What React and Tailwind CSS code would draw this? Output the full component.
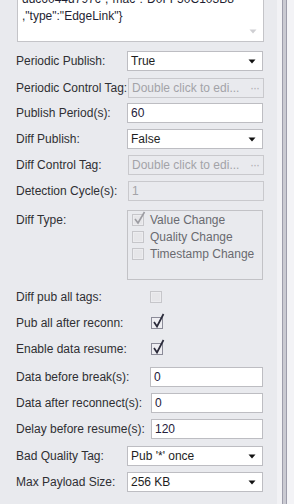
import React from "react";

const font = { fontFamily: '"Liberation Sans", Arial, sans-serif' };

function Arrow() {
  return (
    <svg width="8" height="5" viewBox="0 0 8 5" className="shrink-0">
      <path d="M0.5 0.5 L7.5 0.5 L4 4.5 Z" fill="#111" />
    </svg>
  );
}

function Select({ value }) {
  return (
    <div className="h-[20px] w-[136px] bg-white border border-[#bdbdc2] flex items-center pl-[3px] pr-[6px] text-[#1e1e1e]">
      <span className="flex-1 leading-none">{value}</span>
      <Arrow />
    </div>
  );
}

function Input({ value, w = "w-[136px]" }) {
  return (
    <div className={`h-[20px] ${w} bg-white border border-[#bdbdc2] flex items-center pl-[3px] text-[#24203a]`}>
      <span className="leading-none">{value}</span>
    </div>
  );
}

function Disabled({ value, dots }) {
  return (
    <div className="h-[20px] w-[136px] border border-[#c9c9cd] flex items-center pl-[3px] pr-[4px] text-[#a3a3a8]">
      <span className="flex-1 leading-none whitespace-nowrap overflow-hidden">{value}</span>
      {dots && <span className="leading-none text-[#b0b0b4] tracking-[-1px]">···</span>}
    </div>
  );
}

function Check({ checked, disabled }) {
  if (disabled) {
    return (
      <div className="relative w-[12px] h-[12px] border border-[#c6c6ca] bg-[#ececef] shrink-0">
        <div className="absolute inset-[1px] bg-[#e6e6e9]" />
        {checked && (
          <svg width="14" height="16" viewBox="0 0 14 16" className="absolute left-[0px] top-[-5px]">
            <path d="M2 9 L5 13 L11.5 2" stroke="#9c9ca2" strokeWidth="1.6" fill="none" />
          </svg>
        )}
      </div>
    );
  }
  return (
    <div className="relative w-[12px] h-[12px] border border-[#8b8b98] bg-[#eeeef2] shrink-0">
      {checked && (
        <svg width="14" height="17" viewBox="0 0 14 17" className="absolute left-[0px] top-[-6px]">
          <path d="M2 10 L5 14.5 L11.5 2" stroke="#2a2a3a" strokeWidth="1.7" fill="none" />
        </svg>
      )}
    </div>
  );
}

function Row({ label, children, mt, lw = "w-[111px]" }) {
  return (
    <div className={`flex items-center h-[20px] ${mt}`}>
      <div className={`${lw} shrink-0 whitespace-nowrap text-[#2f2f33]`}>{label}</div>
      {children}
    </div>
  );
}

export default function App() {
  return (
    <div className="w-[294px] h-[504px] overflow-hidden flex bg-[#e9eaee] text-[12px]" style={font}>
      <div className="w-[277px] shrink-0 flex flex-col pl-[16px]">
        {/* textarea */}
        <div className="relative ml-[1px] mt-[-12px] w-[247px] h-[54px] bg-white border border-[#c4c4c8] pl-[4px] pt-[2px] text-[#1f1f33] leading-[17px]">
          <div className="whitespace-nowrap">ddc6044d797c","mac":"D0FF50C103B8</div>
          <div className="whitespace-nowrap">,"type":"EdgeLink"{"}"}</div>
          <svg width="8" height="5" viewBox="0 0 8 5" className="absolute right-[6px] bottom-[7px]">
            <path d="M0.5 0.5 L7.5 0.5 L4 4.5 Z" fill="#cfcfd3" />
          </svg>
        </div>

        <Row label="Periodic Publish:" mt="mt-[9px]">
          <Select value="True" />
        </Row>
        <Row label="Periodic Control Tag:" mt="mt-[7px]" lw="w-[112px]">
          <div className="w-[135px]"><Disabled value="Double click to edi..." dots /></div>
        </Row>
        <Row label="Publish Period(s):" mt="mt-[5px]">
          <Input value="60" />
        </Row>
        <Row label="Diff Publish:" mt="mt-[6px]">
          <Select value="False" />
        </Row>
        <Row label="Diff Control Tag:" mt="mt-[6px]" lw="w-[112px]">
          <div className="w-[135px]"><Disabled value="Double click to edi..." dots /></div>
        </Row>
        <Row label="Detection Cycle(s):" mt="mt-[6px]" lw="w-[112px]">
          <div className="w-[135px]"><Disabled value="1" /></div>
        </Row>

        {/* Diff type */}
        <div className="flex mt-[9px]">
          <div className="w-[111px] shrink-0 pt-[1px] text-[#2f2f33]">Diff Type:</div>
          <div className="w-[136px] h-[70px] border border-[#c2c2c6] pt-0 pl-[4px] flex flex-col text-[#6a6a70]">
            <div className="flex items-center h-[17px] gap-[6px]">
              <Check checked disabled />
              <span>Value Change</span>
            </div>
            <div className="flex items-center h-[17px] gap-[6px]">
              <Check disabled />
              <span>Quality Change</span>
            </div>
            <div className="flex items-center h-[17px] gap-[6px]">
              <Check disabled />
              <span>Timestamp Change</span>
            </div>
          </div>
        </div>

        <Row label="Diff pub all tags:" mt="mt-[7px]" lw="w-[134px]">
          <Check disabled />
        </Row>
        <Row label="Pub all after reconn:" mt="mt-[6px]" lw="w-[135px]">
          <Check checked />
        </Row>
        <Row label="Enable data resume:" mt="mt-[6px]" lw="w-[135px]">
          <Check checked />
        </Row>

        <Row label="Data before break(s):" mt="mt-[8px]" lw="w-[134px]">
          <Input value="0" w="w-[113px]" />
        </Row>
        <Row label="Data after reconnect(s):" mt="mt-[6px]" lw="w-[135px]">
          <Input value="0" w="w-[112px]" />
        </Row>
        <Row label="Delay before resume(s):" mt="mt-[6px]" lw="w-[135px]">
          <Input value="120" w="w-[112px]" />
        </Row>
        <Row label="Bad Quality Tag:" mt="mt-[7px]">
          <Select value="Pub '*' once" />
        </Row>
        <Row label="Max Payload Size:" mt="mt-[6px]">
          <Select value="256 KB" />
        </Row>
      </div>
      {/* right edge */}
      <div className="w-[5px] bg-[#f2f2f5]" />
      <div className="w-[1px] bg-[#9d9dab]" />
      <div className="w-[3px] bg-[#cacad2]" />
      <div className="w-[1px] bg-[#9d9dab]" />
      <div className="flex-1 bg-[#f3f3f6]" />
    </div>
  );
}
